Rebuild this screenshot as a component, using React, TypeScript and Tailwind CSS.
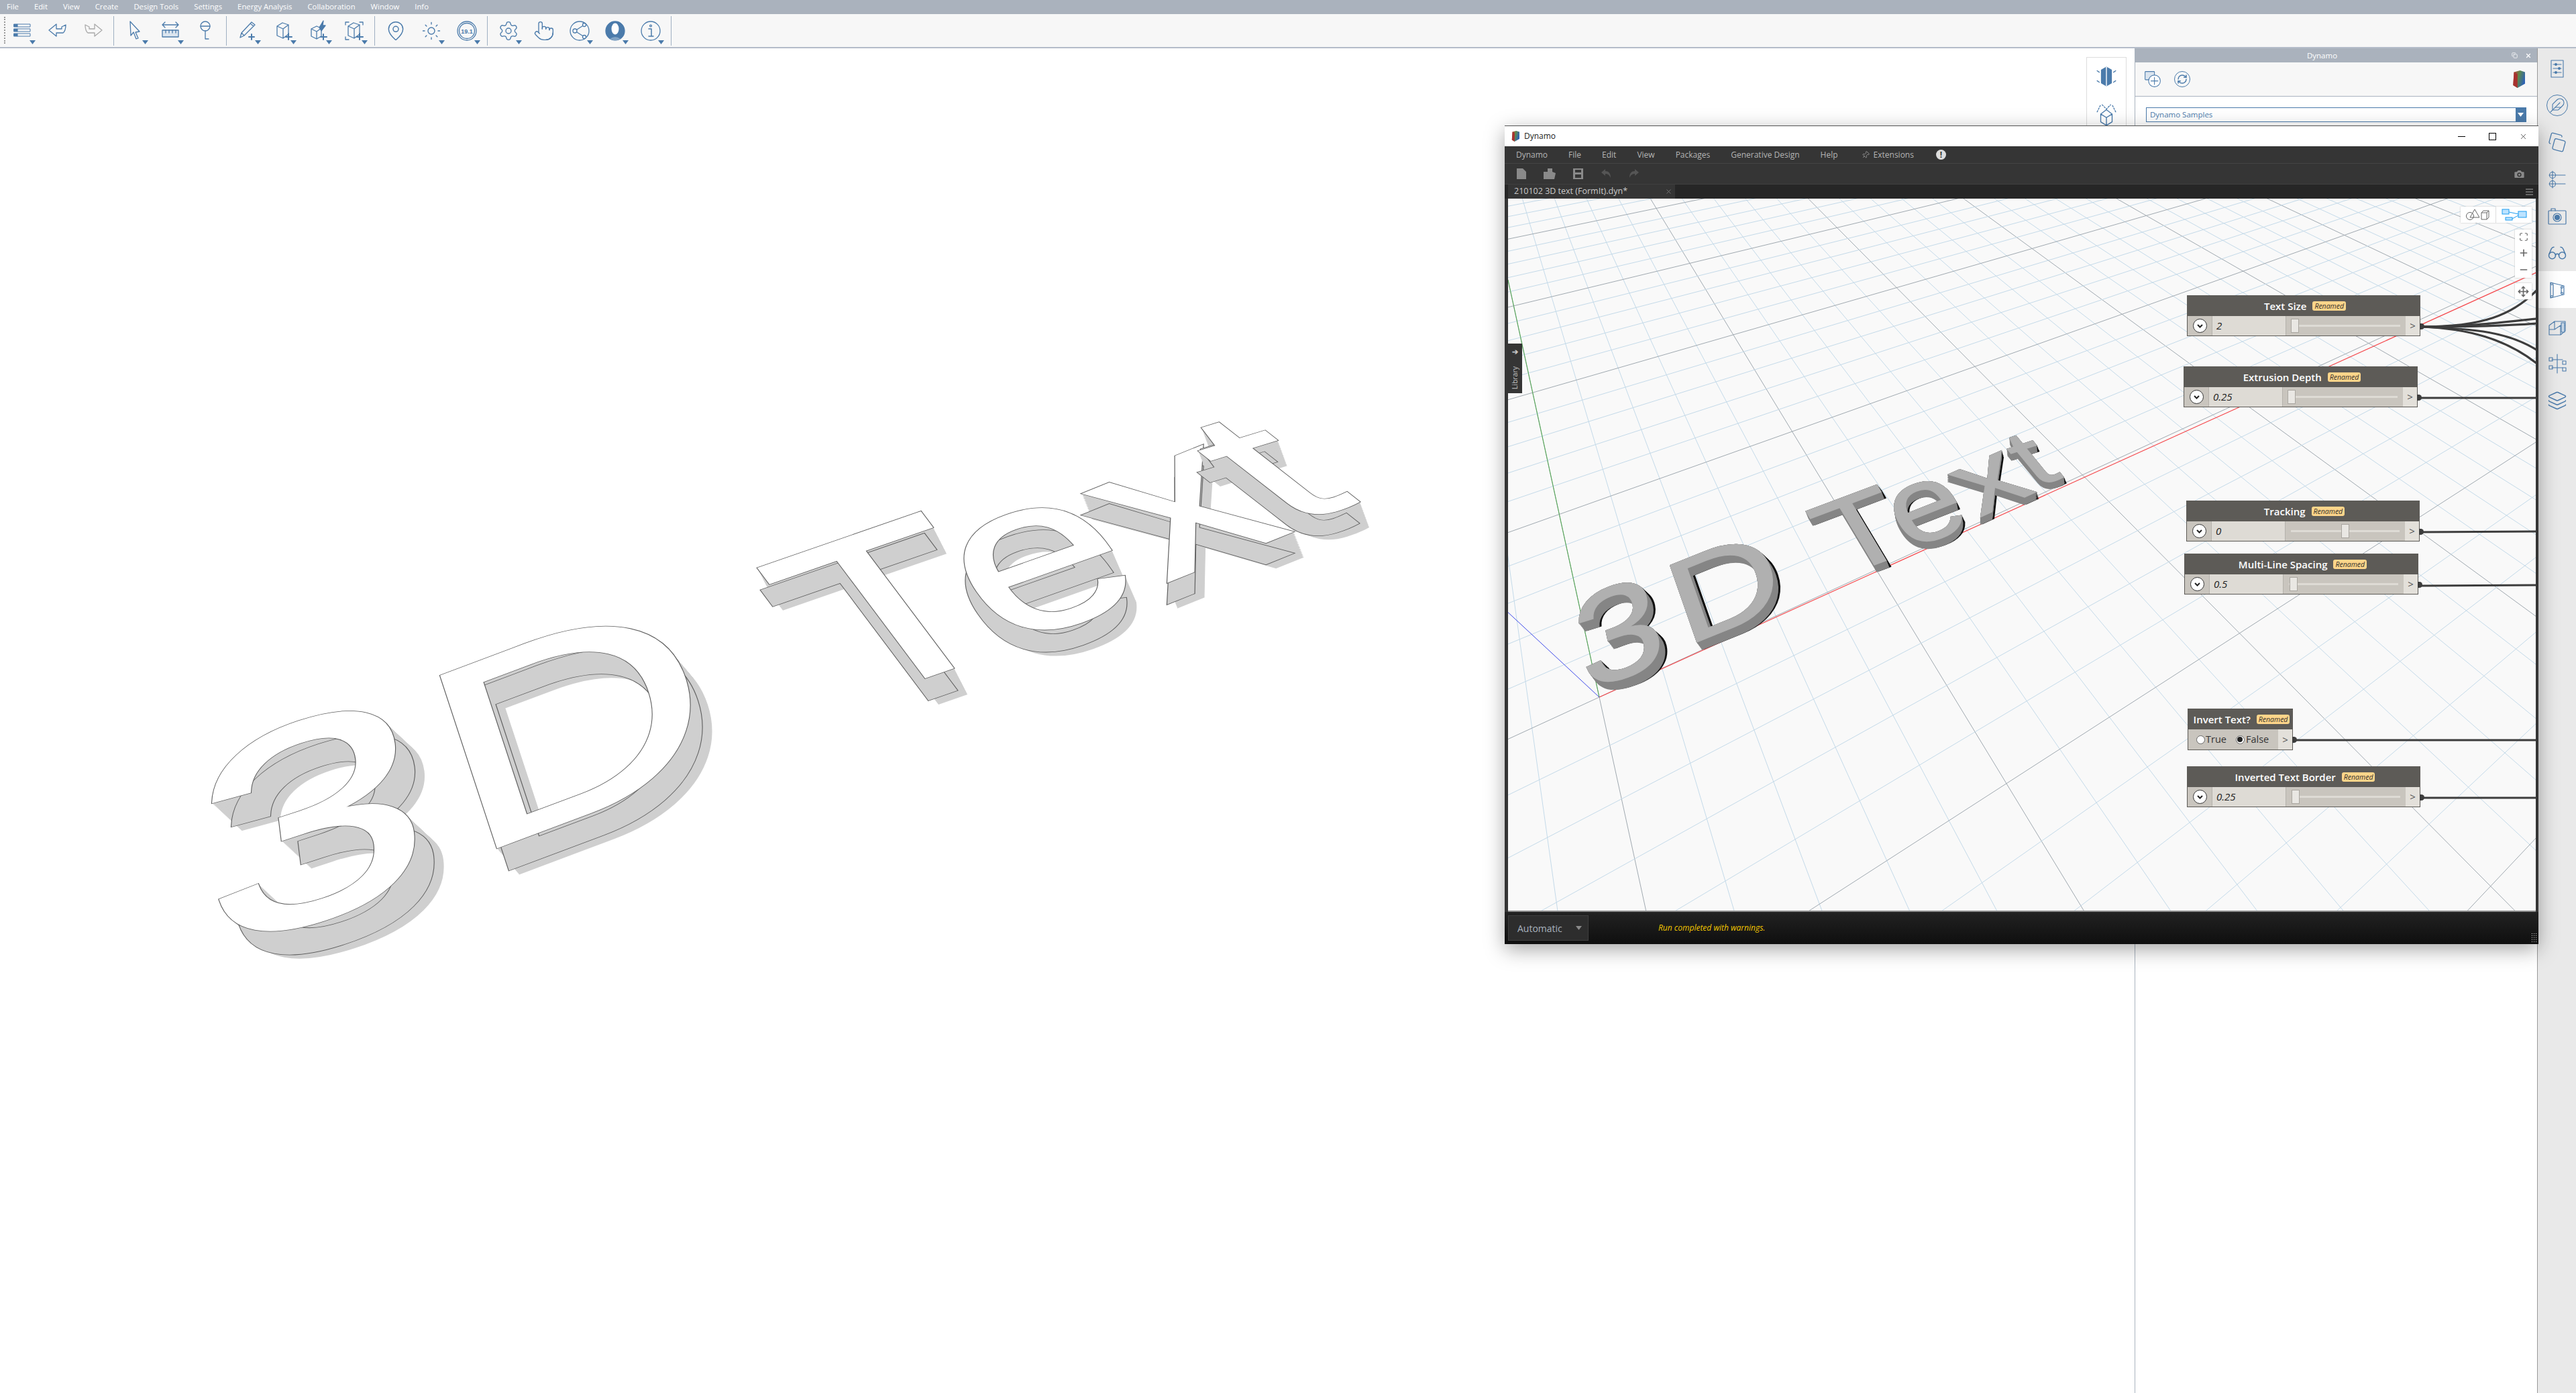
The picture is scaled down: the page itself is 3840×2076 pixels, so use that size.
import React from 'react';
import {
  Settings, MapPin, Sun, Pointer, Camera, Maximize, Plus, Minus, Move, RefreshCw, Pin, Glasses, Layers, Copy, Feather, X,
} from 'lucide-react';

const BLUE = '#4b7bab';

type Pt = [number, number];
interface Glyph { ch: string; o: Pt; x: Pt; u: Pt; ex: Pt }

// each letter of the model sits on its own plane matrix, the view has perspective
const leftModel: Glyph[] = [
  { ch: '3', o: [315, 1422], x: [605, -198], u: [-52, -418], ex: [29, 35] },
  { ch: 'D', o: [698, 1279], x: [541, -203], u: [-122, -371], ex: [18, 33] },
  { ch: 'T', o: [1270, 1047], x: [425, -147], u: [-215, -286], ex: [5, 33] },
  { ch: 'e', o: [1494, 965], x: [410, -145], u: [-200, -290], ex: [2, 33] },
  { ch: 'x', o: [1738, 868], x: [381, -154], u: [-244, -245], ex: [0, 32] },
  { ch: 't', o: [1920, 781], x: [390, -120], u: [-259, -202], ex: [-1, 32] },
];

const rightModel: Glyph[] = [
  { ch: '3', o: [2364, 1031], x: [225, -85], u: [-40, -190], ex: [9, 12] },
  { ch: 'D', o: [2512, 964], x: [218, -88], u: [-58, -166], ex: [8, 11] },
  { ch: 'T', o: [2746, 860], x: [186, -70], u: [-84, -140], ex: [4, 10] },
  { ch: 'e', o: [2844, 820], x: [178, -70], u: [-78, -145], ex: [2, 11] },
  { ch: 'x', o: [2951, 771], x: [171, -77], u: [-94, -118], ex: [0, 11] },
  { ch: 't', o: [3035, 725], x: [152, -50], u: [-85, -104], ex: [1, 10] },
];

const modelFont = {
  fontSize: 100,
  fontFamily: "'Liberation Sans', sans-serif",
  vectorEffect: 'non-scaling-stroke' as const,
  strokeLinejoin: 'miter' as const,
  strokeMiterlimit: 3,
};

function glyphMatrix(g: Glyph, dx = 0, dy = 0) {
  return `matrix(${g.x[0] / 100} ${g.x[1] / 100} ${-g.u[0] / 100} ${-g.u[1] / 100} ${g.o[0] + dx} ${g.o[1] + dy})`;
}

function Sweep({ g, to, fill, sw }: { g: Glyph; to: Pt; fill: string; sw: number }) {
  const n = Math.ceil(Math.hypot(to[0], to[1]) / 1.5);
  return (
    <>
      {Array.from({ length: n + 1 }).map((_, i) => (
        <text key={i} transform={glyphMatrix(g, (to[0] * i) / n, (to[1] * i) / n)} fill={fill} stroke={fill} strokeWidth={sw} {...modelFont}>
          {g.ch}
        </text>
      ))}
    </>
  );
}

function OutlinedLetter({ g }: { g: Glyph }) {
  return (
    <g>
      <Sweep g={g} to={[g.ex[0] + 15, g.ex[1] + 6]} fill="#cfcfcf" sw={3.6} />
      <text transform={glyphMatrix(g, g.ex[0], g.ex[1])} fill="#cfcfcf" stroke="#5f5f5f" strokeWidth={5.6} {...modelFont}>{g.ch}</text>
      <text transform={glyphMatrix(g, g.ex[0], g.ex[1])} fill="#cfcfcf" stroke="#cfcfcf" strokeWidth={3.6} {...modelFont}>{g.ch}</text>
      <text transform={glyphMatrix(g)} fill="#5f5f5f" stroke="#5f5f5f" strokeWidth={5.6} {...modelFont}>{g.ch}</text>
      <text transform={glyphMatrix(g)} fill="#ffffff" stroke="#ffffff" strokeWidth={3.6} {...modelFont}>{g.ch}</text>
    </g>
  );
}

function ShadedLetter({ g }: { g: Glyph }) {
  return (
    <g>
      <Sweep g={g} to={[g.ex[0] + 3, g.ex[1] - 1]} fill="#111111" sw={1.6} />
      <Sweep g={g} to={g.ex} fill="#858585" sw={1.6} />
      <text transform={glyphMatrix(g)} fill="#b0b0b0" stroke="#b0b0b0" strokeWidth={1.6} {...modelFont}>{g.ch}</text>
    </g>
  );
}

// floor grid, from the two vanishing points of the view
const P0: Pt = [2384, 1039];
const VA: Pt = [2087, -317];
const VB: Pt = [5198, -255];
const alpha = 0.0344;
const beta = 0.0503;

function onAxis(k: number, v: Pt): Pt {
  return [(P0[0] + k * v[0]) / (k + 1), (P0[1] + k * v[1]) / (k + 1)];
}

function longLine(from: Pt, through: Pt) {
  const dx = through[0] - from[0];
  const dy = through[1] - from[1];
  const l = Math.hypot(dx, dy);
  return { x1: from[0], y1: from[1], x2: through[0] + (dx / l) * 6000, y2: through[1] + (dy / l) * 6000 };
}

function FloorGrid() {
  const lines: React.ReactNode[] = [];
  for (let u = -28; u <= 42; u++) {
    const major = u % 5 === 0;
    lines.push(<line key={`a${u}`} {...longLine(VA, onAxis(alpha * u, VB))} stroke={major ? '#a0a9b0' : '#c4dae9'} strokeWidth={1} />);
  }
  for (let v = -19; v <= 32; v++) {
    const major = v % 5 === 0;
    lines.push(<line key={`b${v}`} {...longLine(VB, onAxis(beta * v, VA))} stroke={major ? '#a0a9b0' : '#c4dae9'} strokeWidth={1} />);
  }
  return <>{lines}</>;
}

function Wire({ d }: { d: string }) {
  return <path d={d} fill="none" stroke="#3d3d3d" strokeWidth={3.2} />;
}

function DynamoCanvas() {
  return (
    <svg className="absolute inset-0 w-full h-full" viewBox="2248 296 1532 1061">
      <FloorGrid />
      <line x1={2384} y1={1039} x2={3790} y2={402} stroke="#f54a4e" strokeWidth={1.2} />
      <line x1={2384} y1={1039} x2={2248} y2={417} stroke="#4fa84f" strokeWidth={1} />
      <line x1={2384} y1={1039} x2={2243} y2={908} stroke="#3f4bea" strokeWidth={1} />
      {rightModel.map((g) => <ShadedLetter key={g.ch} g={g} />)}
      <Wire d="M3610 487 C3700 487 3745 470 3782 432" />
      <Wire d="M3610 487 C3680 487 3730 480 3782 475" />
      <Wire d="M3610 487 C3680 487 3730 486 3782 482" />
      <Wire d="M3610 487 C3690 490 3740 495 3782 522" />
      <Wire d="M3610 487 C3680 490 3735 505 3782 542" />
      <Wire d="M3606 593 L3782 593" />
      <Wire d="M3609 793 L3782 792" />
      <Wire d="M3607 873 L3782 872" />
      <Wire d="M3419 1103 L3782 1103" />
      <Wire d="M3610 1189 L3782 1189" />
    </svg>
  );
}

function Caret({ color = BLUE, className = '' }: { color?: string; className?: string }) {
  return (
    <svg width="9" height="6" viewBox="0 0 9 6" className={className}>
      <path d="M0 0H9L4.5 6Z" fill={color} />
    </svg>
  );
}

function Ico({ children, size = 32, color = BLUE, sw = 1.3 }: { children: React.ReactNode; size?: number; color?: string; sw?: number }) {
  return (
    <svg width={size} height={size} viewBox="0 0 32 32" fill="none" stroke={color} strokeWidth={sw} strokeLinejoin="round" strokeLinecap="round">
      {children}
    </svg>
  );
}

const BoxShape = () => <path d="M7 9 L15 4 L24 7 V21 L16 27 L7 23 Z M7 9 L16 13 L24 7 M16 13 V27" />;

const toolIcons: { icon: React.ReactNode; caret: boolean }[][] = [
  [
    {
      caret: true,
      icon: (
        <Ico sw={1}>
          <g fill="#4b7bab"><rect x="4" y="6" width="5" height="4" /><rect x="4" y="13" width="5" height="4" /><rect x="4" y="20" width="5" height="4" /></g>
          <rect x="9" y="6" width="19" height="4" /><rect x="9" y="13" width="19" height="4" /><rect x="9" y="20" width="19" height="4" />
        </Ico>
      ),
    },
    { caret: false, icon: <Ico><path d="M14 6 L3 15 L14 24 V19 H24 Q28 16 28 7 L22 10 V13 H14 Z" /></Ico> },
    { caret: false, icon: <Ico color="#a9a9a9"><path d="M18 6 L29 15 L18 24 V19 H8 Q4 16 4 7 L10 10 V13 H18 Z" /></Ico> },
  ],
  [
    { caret: true, icon: <Ico><path d="M9 2 L10 23 L14 18 L18 28 L21 27 L17 18 L23 17 Z" /></Ico> },
    {
      caret: true,
      icon: (
        <Ico>
          <path d="M4 7 H28 M8 3 L4 7 L8 11 M24 3 L28 7 L24 11" />
          <rect x="4" y="15" width="24" height="10" fill="#dbe5ef" />
          <path d="M9 15 V19 M14 15 V19 M19 15 V19 M24 15 V19" />
        </Ico>
      ),
    },
    { caret: false, icon: <Ico><circle cx="15" cy="9" r="7" /><path d="M15 16 V28 H20 M8 9 H22" /></Ico> },
  ],
  [
    { caret: true, icon: <Ico><path d="M5 26 L7 19 L22 3 L27 7 L11 23 Z M7 19 L11 23 M20 5 L25 9" /><path d="M22 21 V29 M18 25 H26" strokeWidth={2} /></Ico> },
    { caret: true, icon: <Ico><BoxShape /><path d="M24 20 V29 M20 25 H29" strokeWidth={2} /></Ico> },
    { caret: true, icon: <Ico><path d="M5 13 L13 9 L20 12 V24 L13 28 L5 24 Z M5 13 L13 17 L20 12 M13 17 V28" /><path d="M17 11 L23 1 L22 8 L26 8 L20 16 Z" fill="#4b7bab" /><path d="M23 21 V29 M19 25 H28" strokeWidth={2} /></Ico> },
    { caret: true, icon: <Ico><path d="M3 7 V3 H8 M24 3 H29 V7 M3 25 V29 H8" /><BoxShape /><path d="M24 20 V29 M20 25 H29" strokeWidth={2} /></Ico> },
  ],
  [
    { caret: false, icon: <MapPin size={32} strokeWidth={1.1} color={BLUE} /> },
    { caret: true, icon: <Sun size={30} strokeWidth={1.1} color={BLUE} /> },
    {
      caret: true,
      icon: (
        <Ico>
          <circle cx="16" cy="16" r="14" /><circle cx="16" cy="16" r="11.5" />
          <text x="16" y="19.5" textAnchor="middle" fontSize="9" fontWeight="700" fill={BLUE} stroke="none" fontFamily="'Liberation Sans', sans-serif">19.1</text>
        </Ico>
      ),
    },
  ],
  [
    { caret: true, icon: <Settings size={32} strokeWidth={1} color={BLUE} /> },
    { caret: false, icon: <Pointer size={32} strokeWidth={1} color={BLUE} /> },
    {
      caret: true,
      icon: (
        <Ico>
          <circle cx="16" cy="16" r="14" /><path d="M9 16 L23 7 M9 16 L23 25" />
          <circle cx="9" cy="16" r="3" fill="#fff" /><circle cx="23" cy="7" r="2.5" fill="#fff" /><circle cx="23" cy="25" r="2.5" fill="#fff" />
        </Ico>
      ),
    },
    {
      caret: true,
      icon: (
        <Ico>
          <circle cx="16" cy="16" r="14" fill="#4b7bab" />
          <ellipse cx="16" cy="13" rx="5.5" ry="8.5" fill="#fff" stroke="none" />
          <path d="M8 28 Q16 22 24 28 L16 31 Z" fill="#fff" stroke="none" opacity="0.3" />
        </Ico>
      ),
    },
    {
      caret: true,
      icon: (
        <Ico>
          <circle cx="16" cy="16" r="14" />
          <path d="M13 13 H17 V24 M13 24 H20" strokeWidth={1.5} />
          <circle cx="16" cy="8.5" r="1.4" />
        </Ico>
      ),
    },
  ],
];

const topMenu = ['File', 'Edit', 'View', 'Create', 'Design Tools', 'Settings', 'Energy Analysis', 'Collaboration', 'Window', 'Info'];

function TopBars() {
  return (
    <>
      <div className="h-[21px] shrink-0 bg-[#aab2bd] flex items-center gap-[23px] pl-[10px] text-[11.3px] text-white font-['Open_Sans',sans-serif]">
        {topMenu.map((m) => <span key={m}>{m}</span>)}
      </div>
      <div className="h-[51px] shrink-0 bg-[#f7f7f7] border-b-2 border-[#b4bcc9] flex items-stretch pl-[6px] pb-[1px]">
        <div className="border-l-2 border-dotted border-[#999999] my-[4px] -mr-[2px]" />
        {toolIcons.map((group, i) => (
          <div key={i} className={`flex border-r border-[#9fb0c2] mt-[3px] mb-[1px] pr-[4px] ${i === 0 ? 'pl-0' : 'pl-[4px]'}`}>
            {group.map((tool, j) => (
              <div key={j} className="relative w-[53px] flex items-center justify-center">
                {tool.icon}
                {tool.caret && <Caret className="absolute right-[6px] bottom-[2px]" />}
              </div>
            ))}
          </div>
        ))}
      </div>
    </>
  );
}

function DynamoLogo({ size = 20 }: { size?: number }) {
  return (
    <svg width={size * 0.75} height={size} viewBox="0 0 15 20">
      <defs>
        <linearGradient id="dynLogo" x1="0" y1="0" x2="1" y2="0.4">
          <stop offset="0" stopColor="#c8352f" />
          <stop offset="0.5" stopColor="#5d8a4c" />
          <stop offset="1" stopColor="#2e62b5" />
        </linearGradient>
      </defs>
      <path d="M2 2 L9 0 L15 2 V15 L6 20 L1 17 Z" fill="url(#dynLogo)" />
      <path d="M2 2 L6 4 V20 L1 17 Z" fill="#a8322f" />
    </svg>
  );
}

const stripIcons: React.ReactNode[] = [
  <Ico key="s0" sw={1.1}><rect x="7" y="4" width="18" height="25" /><path d="M10 10 H22 M10 16 H22 M10 22 H22" /><circle cx="14" cy="10" r="1.4" fill={BLUE} /><circle cx="19" cy="16" r="1.4" fill={BLUE} /><circle cx="14" cy="22" r="1.4" fill={BLUE} /></Ico>,
  <div key="s1" className="relative flex items-center justify-center w-[32px] h-[32px] rounded-full border border-[#4b7bab]"><Feather size={24} strokeWidth={1.1} color={BLUE} /></div>,
  <Copy key="s2" size={28} strokeWidth={1.1} color={BLUE} className="rotate-[15deg]" />,
  <Ico key="s3" sw={1.1}><circle cx="9" cy="10" r="4.5" /><circle cx="9" cy="23" r="4.5" /><path d="M9 4 V16 M9 17 V29 M4 10 H14 M4 23 H14 M13 10 H28 M13 23 H28" /></Ico>,
  <Ico key="s4" sw={1.2}><rect x="3" y="8" width="26" height="20" rx="1" /><path d="M7 8 V5 H13 V8" /><circle cx="16" cy="18" r="6" /><circle cx="16" cy="18" r="3.5" fill={BLUE} /></Ico>,
  <Glasses key="s5" size={30} strokeWidth={1.2} color={BLUE} />,
  <Ico key="s6" sw={1.2}><path d="M6 5 L26 10 V23 L6 28 Z M10 8 V25 M22 12 V21" /><circle cx="8" cy="7" r="1.5" /><circle cx="8" cy="26" r="1.5" /><circle cx="23" cy="12" r="1.5" /><circle cx="23" cy="21" r="1.5" /></Ico>,
  <Ico key="s7" sw={1.1}><path d="M4 14 L12 8 H28 V22 L21 28 H4 Z M12 8 V20 H4 M12 20 L21 14 H28 M21 14 V28" /><rect x="22" y="10" width="5" height="14" fill="#c7d6e5" /></Ico>,
  <Ico key="s8" sw={1.1}><path d="M16 2 V30 M8 10 H24 M8 22 H24" /><rect x="4" y="7" width="5" height="5" /><rect x="4" y="19" width="5" height="5" /><rect x="24" y="12" width="5" height="5" /><rect x="24" y="22" width="5" height="5" /></Ico>,
  <Layers key="s9" size={30} strokeWidth={1.2} color={BLUE} />,
];

function RightPanel() {
  return (
    <div className="w-[600px] shrink-0 border-l border-[#aab4c0] bg-white flex flex-col">
      <div className="h-[21px] bg-[#aab2bd] relative flex items-center justify-center pr-[42px] text-[11.5px] text-white font-['Open_Sans',sans-serif]">
        Dynamo
        <div className="absolute right-[8px] flex items-center gap-[11px]">
          <Copy size={9} color="#fff" strokeWidth={2} />
          <X size={10} color="#fff" strokeWidth={3} />
        </div>
      </div>
      <div className="h-[51px] bg-[#f7f7f7] border-b border-[#aab4c0] flex items-center pl-[12px] pr-[18px]">
        <Ico size={28} sw={1.2}><rect x="3" y="3" width="16" height="14" rx="1" fill="#dbe5ef" /><circle cx="19" cy="19" r="10" fill="#fff" /><path d="M19 13 V25 M13 19 H25" /></Ico>
        <div className="ml-[18px] w-[24px] h-[24px] rounded-full border border-[#4b7bab] flex items-center justify-center">
          <RefreshCw size={16} color={BLUE} strokeWidth={2.2} />
        </div>
        <div className="ml-auto"><DynamoLogo size={26} /></div>
      </div>
      <div className="mt-[16px] mx-[16px] h-[22px] border border-[#4b7bab] flex items-center text-[11.5px] text-[#4b7bab] bg-white pl-[5px] font-['Open_Sans',sans-serif]">
        Dynamo Samples
        <div className="ml-auto w-[15px] h-full bg-[#4b7bab] flex items-center justify-center"><Caret color="#ffffff" /></div>
      </div>
    </div>
  );
}

function RightStrip() {
  return (
    <div className="flex-1 bg-[#e9e9e9] border-l border-[#999999] flex flex-col items-center pt-[2px]">
      {stripIcons.map((icon, i) => (
        <div key={i} className={`w-full flex items-center justify-center h-[55px] ${i === 6 ? 'bg-white' : ''}`}>
          {icon}
        </div>
      ))}
    </div>
  );
}

function SideTools() {
  return (
    <div className="absolute left-[3110px] top-[13px] w-[60px] h-[110px] bg-white border border-[#dddddd] flex flex-col items-center pt-[11px] gap-[23px]">
      <Ico size={34}>
        <path d="M16 3 L23 7 V25 L16 29 L9 25 V7 Z" fill={BLUE} />
        <path d="M16 3 V29" stroke="#fff" />
        <path d="M3 8 L6 10 M3 22 L6 24 M29 8 L26 10 M29 22 L26 24" />
      </Ico>
      <Ico size={34}>
        <path d="M16 9 L24 15 V26 L16 31 L8 26 V15 Z M8 15 L16 20 L24 15 M16 20 V31" />
        <path d="M3 12 L8 2 M29 12 L24 2 M10 2 L16 8 L22 2" strokeDasharray="2 2" />
      </Ico>
    </div>
  );
}

interface SliderNode {
  title: string;
  value: string;
  x: number;
  y: number;
  handle: number;
  w: number;
}

const sliderNodes: SliderNode[] = [
  { title: 'Text Size', value: '2', x: 3260, y: 440, handle: 0, w: 348 },
  { title: 'Extrusion Depth', value: '0.25', x: 3255, y: 546, handle: 0, w: 349 },
  { title: 'Tracking', value: '0', x: 3259, y: 746, handle: 76, w: 348 },
  { title: 'Multi-Line Spacing', value: '0.5', x: 3256, y: 825, handle: 2, w: 349 },
  { title: 'Inverted Text Border', value: '0.25', x: 3260, y: 1142, handle: 1, w: 348 },
];

function NodeHeader({ title }: { title: string }) {
  return (
    <div className="h-[31px] bg-[#5d5b57] flex items-center justify-center gap-[9px] pl-[4px] pt-[1px]">
      <span className="text-[15px] font-semibold text-white leading-none">{title}</span>
      <span className="h-[14px] px-[3px] rounded-[3px] bg-[#fdd58a] text-[10.5px] italic text-[#33302a] flex items-center leading-none">Renamed</span>
    </div>
  );
}

function OutPort() {
  return (
    <>
      <div className="w-[21px] bg-[#e3e0da] flex items-center justify-center text-[15px] text-[#555555]">&gt;</div>
      <div className="absolute -right-[6px] top-[42px] w-[7px] h-[9px] rounded-r-full bg-[#3d3d3d]" />
    </>
  );
}

function SliderCard({ node }: { node: SliderNode }) {
  return (
    <div className="absolute font-['Open_Sans',sans-serif]" style={{ left: node.x - 2248, top: node.y - 296, width: node.w }}>
      <NodeHeader title={node.title} />
      <div className="h-[30px] bg-[#c9c5be] flex border-x border-b border-[#5d5b57]">
        <div className="w-[36px] flex items-center justify-center">
          <div className="w-[21px] h-[21px] rounded-full bg-white border-[1.5px] border-[#333333] flex items-center justify-center">
            <svg width="9" height="6" viewBox="0 0 9 6"><path d="M1 1 L4.5 4.5 L8 1" fill="none" stroke="#222" strokeWidth="2" /></svg>
          </div>
        </div>
        <div className="w-[111px] bg-[#dedbd5] border-x border-[#b5b2ac] flex items-center pl-[6px] text-[15px] italic text-[#222222]">{node.value}</div>
        <div className="flex-1 relative flex items-center px-[8px]">
          <div className="flex-1 h-[3px] bg-[#dedbd5]" />
          <div className="absolute top-[4px] w-[12px] h-[21px] bg-[#e9e7e3] border border-[#aaa7a1]" style={{ left: 7 + node.handle }} />
        </div>
        <OutPort />
      </div>
    </div>
  );
}

function RadioDot({ on }: { on: boolean }) {
  return (
    <div className="w-[13px] h-[13px] rounded-full bg-white border border-[#666666] flex items-center justify-center">
      {on && <div className="w-[8px] h-[8px] rounded-full bg-[#222222]" />}
    </div>
  );
}

function InvertCard() {
  return (
    <div className="absolute w-[157px] font-['Open_Sans',sans-serif]" style={{ left: 3261 - 2248, top: 1056 - 296 }}>
      <NodeHeader title="Invert Text?" />
      <div className="h-[31px] bg-[#c9c5be] flex border-x border-b border-[#5d5b57] text-[14.5px] text-[#333333]">
        <div className="flex-1 flex items-center pl-[12px]">
          <RadioDot on={false} /><span className="ml-[1px]">True</span>
          <div className="ml-[14px]"><RadioDot on /></div><span className="ml-[2px]">False</span>
        </div>
        <OutPort />
      </div>
    </div>
  );
}

function ViewControls() {
  return (
    <>
      <div className="absolute right-[6px] top-[12px] w-[106px] h-[24px] bg-white shadow-[0_0_2px_#bbbbbb] flex">
        <div className="w-[53px] border-r border-[#dddddd] flex items-center justify-center">
          <svg width="36" height="18" viewBox="0 0 36 18" fill="none" stroke="#666" strokeWidth="1">
            <circle cx="6" cy="11" r="5.5" /><path d="M13 1 L20 13 H6 Z" /><path d="M23 6 H31 V16 H23 Z M23 6 L26 3 H34 V13 L31 16 M31 6 L34 3" />
          </svg>
        </div>
        <div className="flex-1 flex items-center justify-center">
          <svg width="38" height="18" viewBox="0 0 38 18" fill="#bde3ff" stroke="#1c9cf0" strokeWidth="1">
            <rect x="1" y="1" width="10" height="7" /><rect x="6" y="13" width="10" height="4" /><rect x="25" y="4" width="12" height="9" /><path d="M11 5 L25 8 M16 15 L25 10" fill="none" />
          </svg>
        </div>
      </div>
      <div className="absolute right-[6px] top-[46px] w-[25px] h-[72px] bg-white shadow-[0_0_2px_#bbbbbb] flex flex-col items-center justify-around text-[#666666]">
        <Maximize size={14} strokeWidth={2} />
        <Plus size={16} strokeWidth={2.4} />
        <Minus size={16} strokeWidth={2.4} />
      </div>
      <div className="absolute right-[6px] top-[126px] w-[25px] h-[24px] bg-white shadow-[0_0_2px_#bbbbbb] flex items-center justify-center text-[#666666]">
        <Move size={17} strokeWidth={2.2} />
      </div>
    </>
  );
}

const dynMenu = ['Dynamo', 'File', 'Edit', 'View', 'Packages', 'Generative Design', 'Help'];

function DynamoWindow() {
  return (
    <div className="absolute left-[2243px] top-[187px] w-[1541px] h-[1220px] bg-[#353535] flex flex-col border-t border-[#555555] shadow-[0_8px_28px_rgba(0,0,0,0.35)] font-['Open_Sans',sans-serif]">
      <div className="h-[30px] shrink-0 bg-white flex items-center pl-[10px] text-[12px] text-[#222222]">
        <DynamoLogo size={16} />
        <span className="ml-[7px]">Dynamo</span>
        <div className="ml-auto flex items-center h-full">
          <div className="w-[45px] flex justify-center"><div className="w-[11px] h-px bg-black" /></div>
          <div className="w-[46px] flex justify-center"><div className="w-[11px] h-[11px] border border-black" /></div>
          <div className="w-[46px] flex justify-center"><X size={13} strokeWidth={1.1} color="#000" /></div>
        </div>
      </div>
      <div className="h-[26px] shrink-0 border-b border-[#444444] flex items-center pl-[17px] gap-[31px] text-[12px] text-[#b4b4b4]">
        {dynMenu.map((m) => <span key={m}>{m}</span>)}
        <span className="flex items-center gap-[6px] ml-[4px]"><Pin size={12} strokeWidth={1.4} className="rotate-45" />Extensions</span>
        <span className="ml-[2px] w-[15px] h-[15px] rounded-full bg-[#dddddd] flex items-center justify-center text-[12px] font-bold text-[#353535]">!</span>
      </div>
      <div className="h-[31px] shrink-0 border-b border-[#3f3f3f] flex items-center pl-[18px] gap-[26px] relative">
        <svg width="14" height="16" viewBox="0 0 14 16"><path d="M0 0H9L14 5V16H0Z" fill="#8a8a8a" /></svg>
        <svg width="18" height="16" viewBox="0 0 18 16"><path d="M0 5H6V0H13V5L18 7L16 16H0Z" fill="#8a8a8a" /></svg>
        <svg width="15" height="16" viewBox="0 0 15 16"><path d="M0 0H15V16H0Z M3 2V6H12V2Z M3 9V14H12V9Z" fill="#8a8a8a" fillRule="evenodd" /></svg>
        <svg width="16" height="14" viewBox="0 0 16 14"><path d="M1 5L7 0V3C12 3 15 6 15 13C13 9 11 7 7 7V10Z" fill="#555555" /></svg>
        <svg width="16" height="14" viewBox="0 0 16 14"><path d="M15 5L9 0V3C4 3 1 6 1 13C3 9 5 7 9 7V10Z" fill="#555555" /></svg>
        <Camera size={19} fill="#8a8a8a" color="#353535" className="absolute right-[19px]" />
      </div>
      <div className="h-[21px] shrink-0 bg-[#262626] flex pl-[5px] pr-[8px]">
        <div className="w-[249px] bg-[#353535] flex items-center justify-between pl-[9px] pr-[4px] text-[12.5px] text-[#c9c9c9]">
          <span>210102 3D text (FormIt).dyn*</span>
          <X size={11} color="#777777" strokeWidth={2} />
        </div>
        <div className="ml-auto flex flex-col justify-center gap-[2px]">
          <div className="w-[11px] h-[2px] bg-[#666666]" />
          <div className="w-[11px] h-[2px] bg-[#666666]" />
          <div className="w-[11px] h-[2px] bg-[#666666]" />
        </div>
      </div>
      <div className="flex-1 mx-[5px] mr-[4px] bg-[#f9f9f9] relative overflow-hidden border-b-2 border-[#8f8f8f]">
        <DynamoCanvas />
        <div className="absolute left-0 top-[216px] w-[21px] h-[74px] bg-[#353535] flex flex-col items-center justify-between py-[6px] text-[#c4c4c4]">
          <span className="text-[11px] font-bold leading-none">➔</span>
          <span className="text-[10.5px] leading-none [writing-mode:vertical-rl] rotate-180 font-['Open_Sans',sans-serif]">Library</span>
        </div>
        <ViewControls />
        {sliderNodes.map((n) => <SliderCard key={n.title} node={n} />)}
        <InvertCard />
      </div>
      <div className="h-[48px] shrink-0 bg-gradient-to-b from-[#222222] to-[#0f0f0f] flex items-center pl-[5px] relative">
        <div className="w-[120px] h-[38px] bg-[#2d2d2d] border border-[#3e3e3e] flex items-center pl-[13px] pr-[9px] text-[14px] text-[#a8b2bd]">
          Automatic
          <Caret color="#8a8a8a" className="ml-auto" />
        </div>
        <span className="ml-[104px] text-[12px] italic text-[#f2c600]">Run completed with warnings.</span>
        <div className="absolute right-[2px] bottom-[3px] w-[9px] h-[14px] [background-image:radial-gradient(#dddddd_1px,transparent_1px)] [background-size:3px_3px]" />
      </div>
    </div>
  );
}

export default function App() {
  return (
    <div className="relative w-[3840px] h-[2076px] overflow-hidden bg-white flex flex-col">
      <TopBars />
      <div className="flex-1 flex relative">
        <div className="w-[3182px] relative">
          <svg className="absolute left-0 top-0" width="2200" height="1600" viewBox="0 72 2200 1600">
            {leftModel.map((g) => <OutlinedLetter key={g.ch} g={g} />)}
          </svg>
          <SideTools />
        </div>
        <RightPanel />
        <RightStrip />
      </div>
      <DynamoWindow />
    </div>
  );
}
